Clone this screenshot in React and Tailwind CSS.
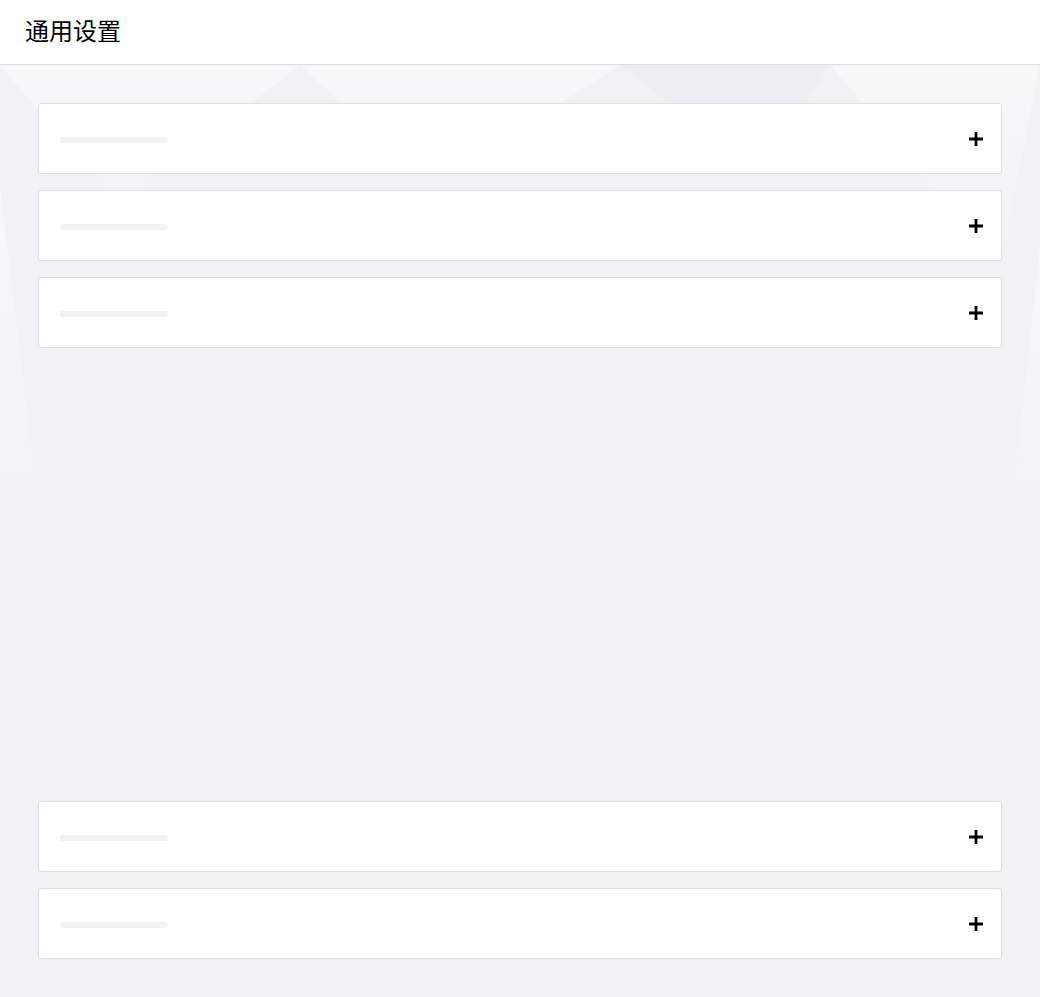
import React from 'react';

const sections = [
  { id: 'basic' },
  { id: 'display' },
  { id: 'notify' },
];

const bottomSections = [{ id: 'storage' }, { id: 'about' }];

// Collapsed panel: skeleton title + plus toggle
const Panel = () => (
  <div className="h-[71px] bg-white border border-[#dcdfe6] rounded-[3px] flex items-center justify-between pl-[21px] pr-[17px] shrink-0">
    <div className="w-[108px] h-[6px] mt-[3px] rounded-full bg-[#f1f2f4]" />
    <svg width="16" height="16" viewBox="0 0 16 16" className="text-black">
      <path d="M8 1v14M1 8h14" stroke="currentColor" strokeWidth="2.8" />
    </svg>
  </div>
);

const App = () => {
  return (
    <div
      className="w-[1040px] h-[997px] flex flex-col bg-[#f1f2f4] overflow-hidden"
      style={{ fontFamily: '"Noto Sans CJK SC", "Noto Sans", sans-serif' }}
    >
      <header className="h-[65px] shrink-0 bg-white border-b border-[#dcdde2] flex items-center pl-[25px]">
        <h1 className="text-[24px] leading-none text-black pb-[5px]">通用设置</h1>
      </header>

      <main className="relative flex-1 flex flex-col p-[38px] gap-[16px]">
        {/* faint polygon backdrop */}
        <svg className="absolute inset-0 w-full h-[460px] pointer-events-none" viewBox="0 0 1040 460" preserveAspectRatio="none">
          <defs>
            <linearGradient id="fade" x1="0" y1="0" x2="0" y2="1">
              <stop offset="0" stopColor="#ffffff" stopOpacity="0.45" />
              <stop offset="1" stopColor="#ffffff" stopOpacity="0" />
            </linearGradient>
          </defs>
          <polygon points="0,0 300,0 120,140" fill="url(#fade)" />
          <polygon points="300,0 620,0 430,120" fill="url(#fade)" />
          <polygon points="620,0 830,0 760,110" fill="#e9eaed" opacity="0.35" />
          <polygon points="830,0 1040,0 1000,200" fill="url(#fade)" />
          <polygon points="0,120 40,460 0,460" fill="url(#fade)" />
          <polygon points="1040,180 1010,460 1040,460" fill="url(#fade)" />
        </svg>

        {sections.map((s) => (
          <div key={s.id} className="relative">
            <Panel />
          </div>
        ))}

        <div className="flex-1" />

        {bottomSections.map((s) => (
          <div key={s.id} className="relative">
            <Panel />
          </div>
        ))}
      </main>
    </div>
  );
};

export default App;
